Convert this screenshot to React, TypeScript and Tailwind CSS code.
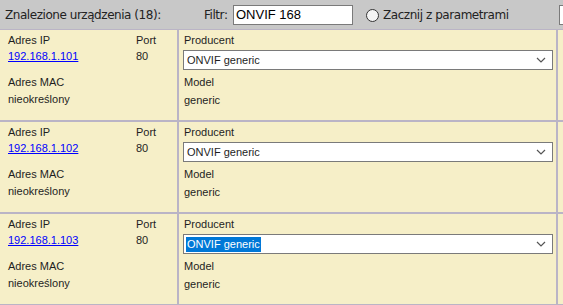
import React from "react";

const devices = [
  { ip: "192.168.1.101", port: "80", mac: "nieokreślony", vendor: "ONVIF generic", model: "generic" },
  { ip: "192.168.1.102", port: "80", mac: "nieokreślony", vendor: "ONVIF generic", model: "generic" },
  { ip: "192.168.1.103", port: "80", mac: "nieokreślony", vendor: "ONVIF generic", model: "generic", focused: true },
];

function Chevron() {
  return (
    <svg width="10" height="6" viewBox="0 0 10 6" className="shrink-0">
      <polyline points="1,1 5,5 9,1" fill="none" stroke="#555" strokeWidth="1.2" />
    </svg>
  );
}

function DeviceRow({ d }: { d: (typeof devices)[number] }) {
  return (
    <div className="flex h-[92px] border-b-2 border-[#bab4c6] bg-[#f6efc8] text-[11px] leading-[16px] text-[#1e1e1e]">
      <div className="grid w-[177px] shrink-0 grid-cols-[128px_1fr] pl-[8px] pt-[2px]">
        <div>
          <div>Adres IP</div>
          <a href="#" className="text-[#0000ff] underline">
            {d.ip}
          </a>
          <div className="mt-[10px]">Adres MAC</div>
          <div className="mt-[1px]">{d.mac}</div>
        </div>
        <div>
          <div>Port</div>
          <div>{d.port}</div>
        </div>
      </div>
      <div className="flex w-[381px] shrink-0 flex-col border-x-2 border-[#bab4c6] pl-[4px] pr-[3px] pt-[2px]">
        <div className="pl-[1px]">Producent</div>
        <div className="mt-[2px] flex h-[20px] items-center justify-between border border-[#7a7a7a] bg-white pl-[2px] pr-[6px]">
          <span className={d.focused ? "bg-[#0078d7] px-[1px] leading-[15px] text-white" : "px-[1px] leading-[15px]"}>
            {d.vendor}
          </span>
          <Chevron />
        </div>
        <div className="mt-[4px] pl-[1px]">Model</div>
        <div className="mt-[2px] pl-[1px]">{d.model}</div>
      </div>
      <div className="flex-1" />
    </div>
  );
}

export default function App() {
  return (
    <div className="h-[305px] w-[563px] overflow-hidden bg-[#c8c8c8] font-['Liberation_Sans',Arial,sans-serif]">
      <div className="flex h-[30px] items-center border-b border-[#bab4c6] pt-[1px] font-['DejaVu_Sans',Tahoma,sans-serif] text-[12px] tracking-[-0.45px] text-[#222]">
        <span className="ml-[5px] w-[199px]">Znalezione urządzenia (18):</span>
        <span className="w-[29px]">Filtr:</span>
        <div className="flex h-[20px] w-[120px] items-center border border-[#7a7a7a] bg-white pl-[2px] font-['Liberation_Sans',Arial,sans-serif] text-[13px] tracking-normal text-black">
          ONVIF 168
        </div>
        <div className="ml-[13px] h-[13px] w-[13px] rounded-full border border-[#333] bg-[#f4f4f4]" />
        <span className="ml-[4px]">Zacznij z parametrami</span>
        <div className="ml-auto h-[20px] w-[4px] border-y border-l border-[#7a7a7a] bg-white" />
      </div>
      {devices.map((d) => (
        <DeviceRow key={d.ip} d={d} />
      ))}
    </div>
  );
}
